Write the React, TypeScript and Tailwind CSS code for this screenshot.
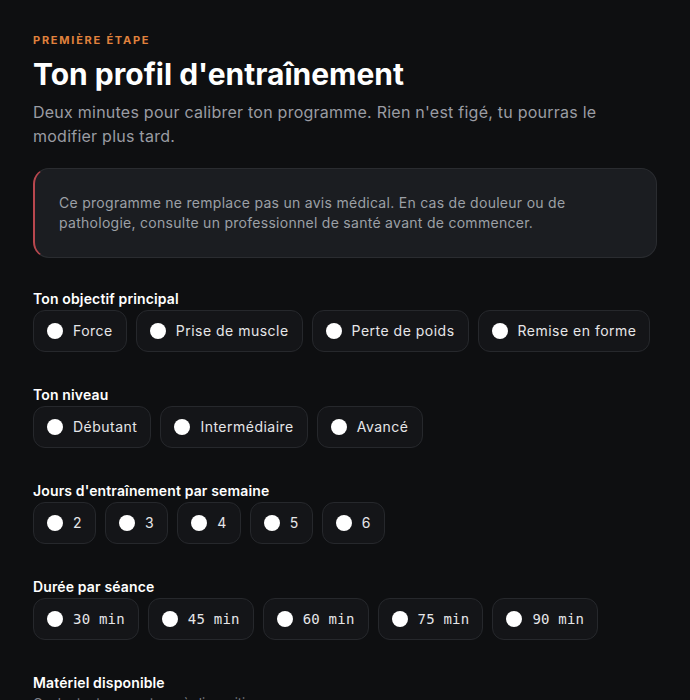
import React, { useState } from 'react';

const sans = { fontFamily: 'Inter, "Noto Sans", sans-serif' };

type Option = { value: string; label: string };

const goals: Option[] = [
  { value: 'force', label: 'Force' },
  { value: 'muscle', label: 'Prise de muscle' },
  { value: 'poids', label: 'Perte de poids' },
  { value: 'forme', label: 'Remise en forme' },
];

const levels: Option[] = [
  { value: 'debutant', label: 'Débutant' },
  { value: 'intermediaire', label: 'Intermédiaire' },
  { value: 'avance', label: 'Avancé' },
];

const days: Option[] = ['2', '3', '4', '5', '6'].map((d) => ({ value: d, label: d }));
const durations: Option[] = ['30', '45', '60', '75', '90'].map((d) => ({ value: d, label: `${d} min` }));

const RadioGroup: React.FC<{
  title: string;
  options: Option[];
  mono?: boolean;
  value: string | null;
  onChange: (v: string) => void;
}> = ({ title, options, mono, value, onChange }) => (
  <fieldset className="mt-[33px] first-of-type:mt-[31px]">
    <legend className="mb-px text-sm leading-5 font-semibold tracking-[0.01em] text-white">{title}</legend>
    <div className="flex flex-wrap gap-[9px]">
      {options.map((o) => {
        const checked = value === o.value;
        return (
          <label
            key={o.value}
            className={`flex cursor-pointer items-center gap-2.5 rounded-xl border px-[13px] py-2.5 text-sm leading-5 text-[#e6e6e8] ${
              checked ? 'border-[#e0823d] bg-[#1d1712]' : 'border-[#26282c] bg-[#141518]'
            }`}
          >
            <span className="flex h-4 w-4 items-center justify-center rounded-full bg-white">
              {checked && <span className="h-2 w-2 rounded-full bg-[#e0823d]" />}
            </span>
            <input type="radio" className="sr-only" checked={checked} onChange={() => onChange(o.value)} />
            <span
              className={
                mono ? 'font-["DejaVu_Sans_Mono",monospace] text-[14px] tracking-[0.015em]' : 'tracking-[0.035em]'
              }
            >
              {o.label}
            </span>
          </label>
        );
      })}
    </div>
  </fieldset>
);

export default function App() {
  const [goal, setGoal] = useState<string | null>(null);
  const [level, setLevel] = useState<string | null>(null);
  const [day, setDay] = useState<string | null>(null);
  const [duration, setDuration] = useState<string | null>(null);

  return (
    <div className="min-h-screen bg-[#0e0f11]" style={sans}>
      <div className="mx-auto max-w-2xl px-6 pt-8 pb-16">
        <p className="text-[11px] leading-4 font-bold tracking-[0.16em] text-[#e0823d]">PREMIÈRE ÉTAPE</p>
        <h1 className="mt-2 text-3xl leading-9 font-bold text-white">Ton profil d'entraînement</h1>
        <p className="mt-2 text-base leading-6 tracking-[0.015em] text-[#9a9ca3]">
          Deux minutes pour calibrer ton programme. Rien n'est figé, tu pourras le modifier plus tard.
        </p>

        <div className="mt-5 rounded-2xl border border-[#2a2c30] border-l-2 border-l-[#b8474e] bg-[#1b1d21] p-6 text-sm leading-5 tracking-[0.02em] text-[#9ca0a6]">
          Ce programme ne remplace pas un avis médical. En cas de douleur ou de pathologie, consulte un professionnel
          de santé avant de commencer.
        </div>

        <RadioGroup title="Ton objectif principal" options={goals} value={goal} onChange={setGoal} />
        <RadioGroup title="Ton niveau" options={levels} value={level} onChange={setLevel} />
        <RadioGroup title="Jours d'entraînement par semaine" options={days} value={day} onChange={setDay} />
        <RadioGroup title="Durée par séance" options={durations} mono value={duration} onChange={setDuration} />

        <div className="mt-[33px]">
          <p className="text-sm leading-5 font-semibold tracking-[0.01em] text-white">Matériel disponible</p>
          <p className="text-[13px] leading-5 text-[#7d8087]">Coche tout ce que tu as à disposition.</p>
        </div>
      </div>
    </div>
  );
}
